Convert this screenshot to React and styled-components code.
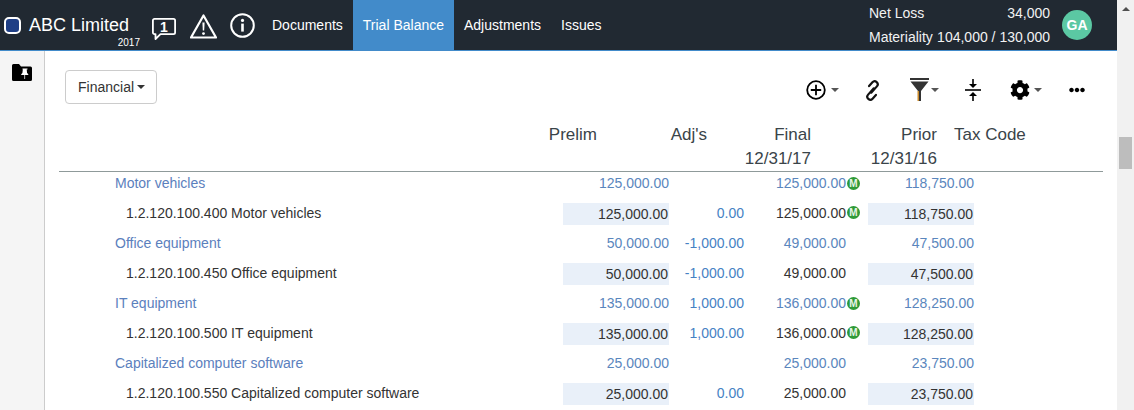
import React from "react";
import styled, { createGlobalStyle } from "styled-components";
import { FaCog, FaEllipsisH } from "react-icons/fa";

const GlobalStyle = createGlobalStyle`
  html, body {
    margin: 0;
    padding: 0;
    height: 410px;
    overflow: hidden;
    background: #fff;
    font-family: "Liberation Sans", Arial, sans-serif;
    font-size: 14px;
    color: #333;
  }
`;

const Page = styled.div`
  display: flex;
  height: 410px;
  overflow: hidden;
`;

const Main = styled.div`
  flex: 1;
  min-width: 0;
  display: flex;
  flex-direction: column;
`;

const Nav = styled.nav`
  display: flex;
  flex: none;
  height: 50px;
  background: #212932;
  border-bottom: 1px solid #428bca;
  color: #fff;
  padding-right: 25px;
`;

const Brand = styled.div`
  display: flex;
  align-items: flex-start;
  gap: 8px;
  padding: 15px 0 0 4px;
  margin-right: 11px;
`;

const BrandLogo = styled.span`
  box-sizing: border-box;
  width: 17px;
  height: 17px;
  margin-top: 2px;
  border: 2px solid #fff;
  border-radius: 5px;
  background: #1f3f86;
`;

const BrandText = styled.div`
  display: flex;
  flex-direction: column;
  width: 111px;
`;

const BrandName = styled.span`
  font-size: 18px;
  line-height: 20px;
  white-space: nowrap;
`;

const BrandYear = styled.span`
  align-self: flex-end;
  margin-top: 2px;
  font-size: 10px;
  line-height: 12px;
`;

const NavIcons = styled.div`
  display: flex;
  align-items: flex-start;
  gap: 13px;
  margin-right: 7px;
  padding-top: 13px;
`;

const NavLink = styled.a`
  display: flex;
  align-items: center;
  padding: 0 10px;
  line-height: 20px;
  color: #fff;
  background: ${(p) => (p.$active ? "#428bca" : "transparent")};
`;

const Stats = styled.div`
  display: flex;
  flex-direction: column;
  gap: 8px;
  width: 181px;
  margin-left: auto;
  padding-top: 5px;
`;

const StatRow = styled.div`
  display: flex;
  justify-content: space-between;
  line-height: 16px;
  color: #f2f2f2;
`;

const Avatar = styled.div`
  width: 30px;
  height: 30px;
  margin: 10px 0 0 12px;
  border-radius: 50%;
  background: #5bc8a3;
  color: #fff;
  font-size: 14px;
  font-weight: 700;
  line-height: 30px;
  text-align: center;
`;

const Body = styled.div`
  flex: 1;
  display: flex;
  min-height: 0;
`;

const Sidebar = styled.aside`
  flex: none;
  box-sizing: border-box;
  width: 45px;
  padding: 13px 0 0 12px;
  background: #f5f5f5;
  border-right: 1px solid #ccc;
`;

const Content = styled.div`
  flex: 1;
  min-width: 0;
  padding: 19px 14px 0;
`;

const Toolbar = styled.div`
  display: flex;
  justify-content: space-between;
  padding: 0 18px 0 6px;
`;

const Dropdown = styled.button`
  box-sizing: border-box;
  display: flex;
  align-items: center;
  gap: 3px;
  width: 92px;
  height: 34px;
  padding: 0 12px;
  background: #fff;
  border: 1px solid #ccc;
  border-radius: 4px;
  color: #333;
  font: 14px "Liberation Sans", Arial, sans-serif;
`;

const Caret = styled.span`
  flex: none;
  width: 0;
  height: 0;
  border-top: 4px solid ${(p) => p.$color || "#333"};
  border-left: 4px solid transparent;
  border-right: 4px solid transparent;
`;

const ToolGroup = styled.div`
  display: flex;
  align-items: center;
  padding-top: 6px;
`;

const ToolButton = styled.div`
  display: flex;
  align-items: center;
  gap: ${(p) => p.$gap || 0}px;
  width: ${(p) => p.$w}px;
  color: #000;
`;

const HeaderRow = styled.div`
  display: grid;
  grid-template-columns: 538px 110px 104px 126px auto;
  margin-top: 19px;
  border-bottom: 1px solid #8f9a9a;
  color: #3a4449;
  font-size: 17px;
  line-height: 24px;
`;

const HeaderCell = styled.div`
  text-align: right;
`;

const TaxHeader = styled.div`
  margin-left: 17px;
`;

const Rows = styled.div`
  display: flex;
  flex-direction: column;
  gap: 8px;
`;

const Row = styled.div`
  display: grid;
  grid-template-columns: 504px 106px 75px 124px 106px;
  height: 22px;
  line-height: 22px;
  color: ${(p) => (p.$group ? "#5a86bd" : "#333")};
`;

const NameCell = styled.div`
  padding-left: ${(p) => (p.$group ? 56 : 67)}px;
  color: ${(p) => (p.$group ? "#5b80bd" : "#333")};
  white-space: nowrap;
`;

const BoxCell = styled.div`
  height: 22px;
  margin-top: 1px;
  padding-right: 1px;
  background: #e9f0f9;
  text-align: right;
`;

const PlainCell = styled.div`
  text-align: right;
`;

const AdjCell = styled.div`
  color: #4682c4;
  text-align: right;
`;

const FinalCell = styled.div`
  position: relative;
  padding-right: 22px;
  text-align: right;
`;

const Badge = styled.span`
  position: absolute;
  left: 103px;
  top: ${(p) => (p.$group ? 5 : 4)}px;
  width: 13px;
  height: 13px;
  border-radius: 50%;
  background: #2e9a38;
  color: #e8f5e8;
  font-size: 10px;
  font-weight: 700;
  line-height: 13px;
  text-align: center;
`;

const Scrollbar = styled.div`
  flex: none;
  display: flex;
  flex-direction: column;
  align-items: center;
  width: 17px;
  padding-top: 7px;
  background: #f1f1f1;
`;

const ScrollArrow = styled.span`
  width: 0;
  height: 0;
  border-bottom: 4px solid #505050;
  border-left: 4px solid transparent;
  border-right: 4px solid transparent;
`;

const ScrollThumb = styled.div`
  width: 13px;
  height: 32px;
  margin-top: 126px;
  background: #bdbdbd;
`;

const CommentIcon = () => (
  <svg width="26" height="27" viewBox="0 0 26 27">
    <path
      d="M3.500 5.900h19a1.600 1.600 0 0 1 1.600 1.600v12a1.600 1.600 0 0 1-1.600 1.600h-13L4.500 26v-4.900h-1a1.600 1.600 0 0 1-1.600-1.600v-12a1.600 1.600 0 0 1 1.600-1.600z"
      fill="none"
      stroke="#fff"
      strokeWidth="1.800"
      strokeLinejoin="round"
    />
    <text
      x="13"
      y="19"
      fill="#fff"
      fontFamily="Liberation Sans, Arial, sans-serif"
      fontSize="14"
      fontWeight="700"
      textAnchor="middle"
    >
      1
    </text>
  </svg>
);

const WarningIcon = () => (
  <svg width="27" height="26" viewBox="0 0 27 26">
    <path
      d="M13.500 2.500L26 24.500H1z"
      fill="none"
      stroke="#fff"
      strokeWidth="2.200"
      strokeLinejoin="round"
    />
    <path d="M12.400 9.500h2.200l-.4 8h-1.400z" fill="#fff" />
    <circle cx="13.500" cy="20.600" r="1.400" fill="#fff" />
  </svg>
);

const InfoIcon = () => (
  <svg width="25" height="25" viewBox="0 0 25 25">
    <circle cx="12.500" cy="12.500" r="11.300" fill="none" stroke="#fff" strokeWidth="2" />
    <circle cx="12.500" cy="7.400" r="1.600" fill="#fff" />
    <rect x="11.200" y="10.600" width="2.600" height="8" fill="#fff" />
  </svg>
);

const FolderPinIcon = () => (
  <svg width="20" height="17" viewBox="0 0 20 17">
    <path
      d="M1.500 0h5.500l2 2.500h9.500a1.500 1.500 0 0 1 1.500 1.500v11.500a1.500 1.500 0 0 1-1.500 1.500h-17A1.500 1.500 0 0 1 0 15.500V1.500A1.500 1.500 0 0 1 1.500 0z"
      fill="#000"
    />
    <path
      d="M10.500 4.500h5v1h-.8l.4 3.500 1.200 1.200v.8h-3.200v4h-.7v-4H9.200v-.8l1.200-1.200.4-3.500h-.3z"
      fill="#fff"
    />
  </svg>
);

const PlusCircleIcon = () => (
  <svg width="20" height="20" viewBox="0 0 20 20">
    <circle cx="10" cy="10" r="8.800" fill="none" stroke="#000" strokeWidth="1.800" />
    <path d="M10 4.800v10.400M4.800 10h10.400" stroke="#000" strokeWidth="1.800" />
  </svg>
);

const ChainIcon = () => (
  <svg width="19" height="21" viewBox="-9.500 -10.500 19 21">
    <g transform="rotate(-48)" fill="none" stroke="#111" strokeWidth="2.200" strokeLinecap="round">
      <path d="M1 -5.500H6a3 3 0 0 1 0 6H-2.500" />
      <path d="M-1 5.500H-6a3 3 0 0 1 0-6H2.500" />
    </g>
  </svg>
);

const FunnelIcon = () => (
  <svg width="19" height="24" viewBox="0 0 19 24">
    <rect x="0" y="0" width="19" height="2" fill="#333" />
    <path d="M0.500 3.500h18L11 13v10H8V13z" fill="#333" />
    <rect x="7.500" y="13" width="1.500" height="10" fill="#c98a2b" />
  </svg>
);

const CompressIcon = () => (
  <svg width="16" height="22" viewBox="0 0 16 22">
    <path d="M8 0v6" stroke="#000" strokeWidth="1.600" />
    <path d="M4 5h8l-4 4z" fill="#000" />
    <path d="M0 11h16" stroke="#000" strokeWidth="1.600" />
    <path d="M4 17h8l-4-4z" fill="#000" />
    <path d="M8 16v6" stroke="#000" strokeWidth="1.600" />
  </svg>
);

const rows = [
  { name: "Motor vehicles", prelim: "125,000.00", final: "125,000.00", prior: "118,750.00", flag: true, group: true },
  { name: "1.2.120.100.400 Motor vehicles", prelim: "125,000.00", adj: "0.00", final: "125,000.00", prior: "118,750.00", flag: true },
  { name: "Office equipment", prelim: "50,000.00", adj: "-1,000.00", final: "49,000.00", prior: "47,500.00", group: true },
  { name: "1.2.120.100.450 Office equipment", prelim: "50,000.00", adj: "-1,000.00", final: "49,000.00", prior: "47,500.00" },
  { name: "IT equipment", prelim: "135,000.00", adj: "1,000.00", final: "136,000.00", prior: "128,250.00", flag: true, group: true },
  { name: "1.2.120.100.500 IT equipment", prelim: "135,000.00", adj: "1,000.00", final: "136,000.00", prior: "128,250.00", flag: true },
  { name: "Capitalized computer software", prelim: "25,000.00", final: "25,000.00", prior: "23,750.00", group: true },
  { name: "1.2.120.100.550 Capitalized computer software", prelim: "25,000.00", adj: "0.00", final: "25,000.00", prior: "23,750.00" },
];

function App() {
  return (
    <Page>
      <GlobalStyle />
      <Main>
        <Nav>
          <Brand>
            <BrandLogo />
            <BrandText>
              <BrandName>ABC Limited</BrandName>
              <BrandYear>2017</BrandYear>
            </BrandText>
          </Brand>
          <NavIcons>
            <CommentIcon />
            <WarningIcon />
            <InfoIcon />
          </NavIcons>
          <NavLink>Documents</NavLink>
          <NavLink $active>Trial Balance</NavLink>
          <NavLink>Adjustments</NavLink>
          <NavLink>Issues</NavLink>
          <Stats>
            <StatRow>
              <span>Net Loss</span>
              <span>34,000</span>
            </StatRow>
            <StatRow>
              <span>Materiality</span>
              <span>104,000 / 130,000</span>
            </StatRow>
          </Stats>
          <Avatar>GA</Avatar>
        </Nav>
        <Body>
          <Sidebar>
            <FolderPinIcon />
          </Sidebar>
          <Content>
            <Toolbar>
              <Dropdown>
                Financial
                <Caret />
              </Dropdown>
              <ToolGroup>
                <ToolButton $w={57} $gap={5}>
                  <PlusCircleIcon />
                  <Caret $color="#555" />
                </ToolButton>
                <ToolButton $w={47}>
                  <ChainIcon />
                </ToolButton>
                <ToolButton $w={55} $gap={2}>
                  <FunnelIcon />
                  <Caret $color="#555" />
                </ToolButton>
                <ToolButton $w={45}>
                  <CompressIcon />
                </ToolButton>
                <ToolButton $w={59} $gap={4}>
                  <FaCog size={20} />
                  <Caret $color="#555" />
                </ToolButton>
                <ToolButton $w={16}>
                  <FaEllipsisH size={16} />
                </ToolButton>
              </ToolGroup>
            </Toolbar>
            <HeaderRow>
              <HeaderCell>Prelim</HeaderCell>
              <HeaderCell>Adj's</HeaderCell>
              <HeaderCell>Final</HeaderCell>
              <HeaderCell>Prior</HeaderCell>
              <TaxHeader>Tax Code</TaxHeader>
              <span />
              <span />
              <HeaderCell>12/31/17</HeaderCell>
              <HeaderCell>12/31/16</HeaderCell>
            </HeaderRow>
            <Rows>
              {rows.map((row) => (
                <Row key={row.name} $group={row.group}>
                  <NameCell $group={row.group}>{row.name}</NameCell>
                  {row.group ? (
                    <PlainCell>{row.prelim}</PlainCell>
                  ) : (
                    <BoxCell>{row.prelim}</BoxCell>
                  )}
                  <AdjCell>{row.adj}</AdjCell>
                  <FinalCell>
                    {row.final}
                    {row.flag && <Badge $group={row.group}>M</Badge>}
                  </FinalCell>
                  {row.group ? (
                    <PlainCell>{row.prior}</PlainCell>
                  ) : (
                    <BoxCell>{row.prior}</BoxCell>
                  )}
                </Row>
              ))}
            </Rows>
          </Content>
        </Body>
      </Main>
      <Scrollbar>
        <ScrollArrow />
        <ScrollThumb />
      </Scrollbar>
    </Page>
  );
}

export default App;
